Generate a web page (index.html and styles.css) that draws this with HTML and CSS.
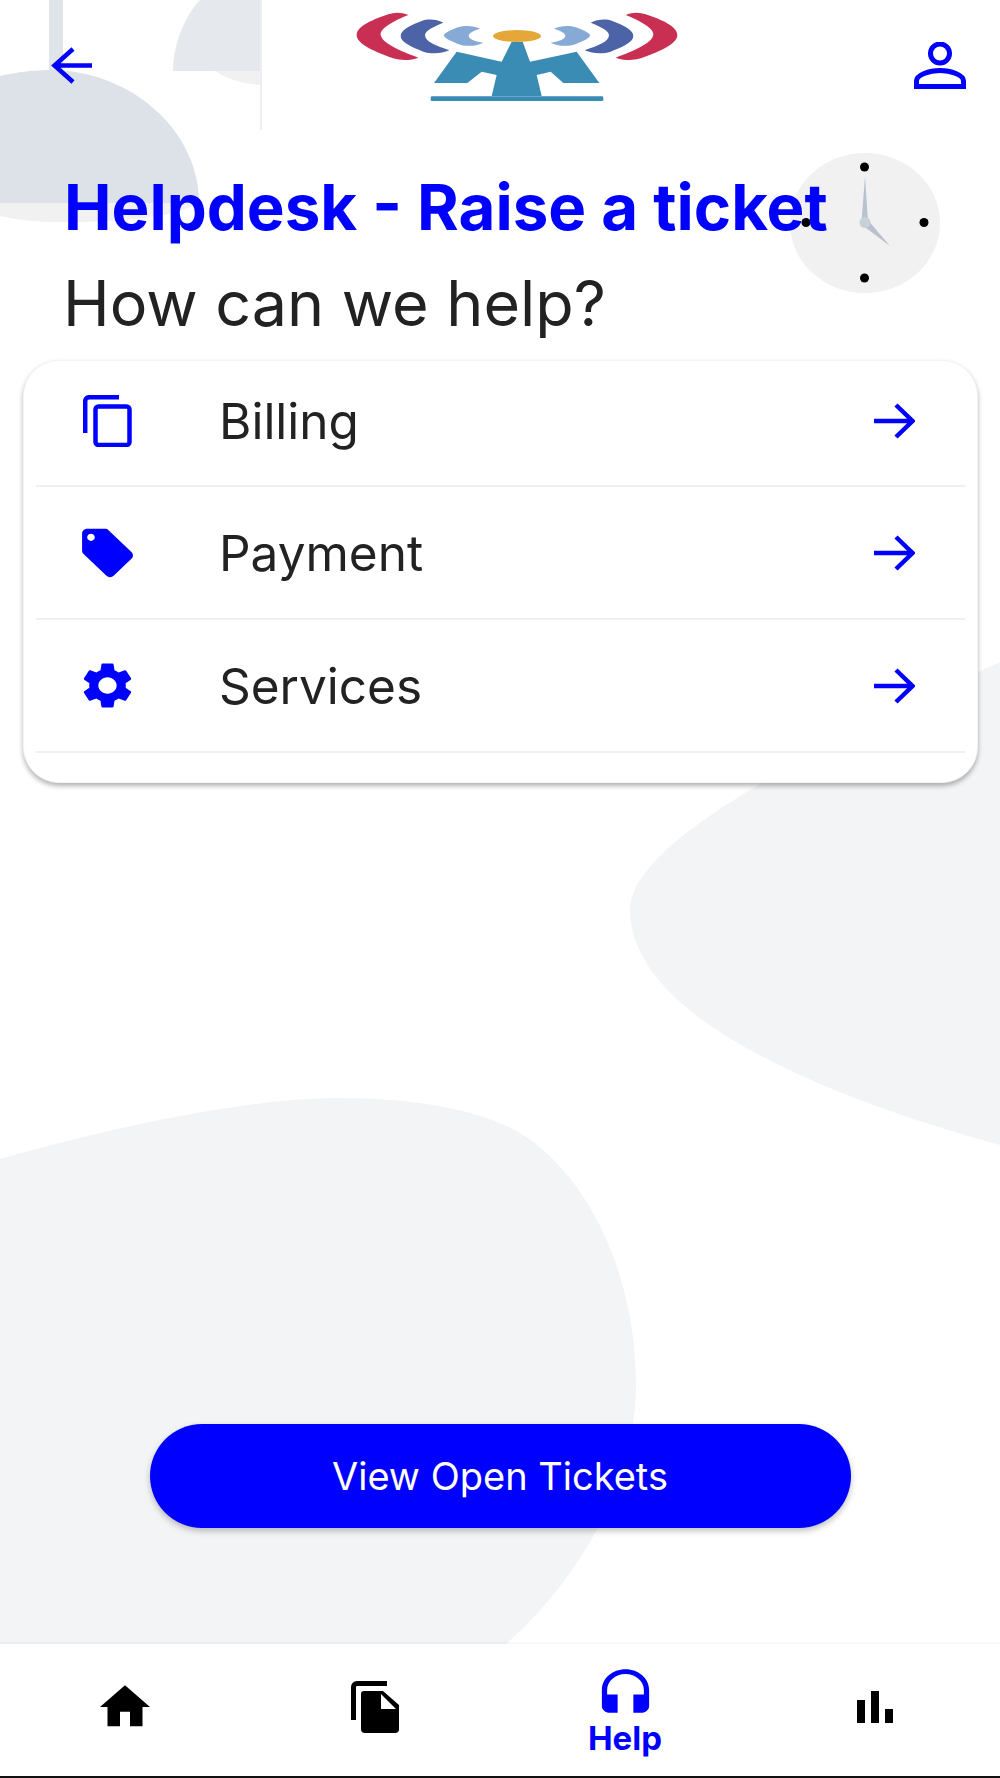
FILE: index.html
```html
<!DOCTYPE html>
<html>
<head>
    <meta charset="utf-8">
    <title>Helpdesk</title>
    <link rel="stylesheet" href="styles.css">
</head>
<body>
<div class="page">

    <!-- background shapes and clock -->
    <svg class="backdrop" viewBox="0 0 1000 1778" width="1000" height="1778">
        <rect x="49" y="0" width="14" height="72" fill="#e0e5ea"/>
        <path d="M0 203H198Q170 222 60 222Q25 222 0 216Z" fill="#f1f1f1"/>
        <path d="M0 76C17 72 35 70 50 70C130 70 199 130 199 203H0Z" fill="#dde2e8"/>
        <path d="M215 71Q235 84 260 85V71Z" fill="#f1f1f1"/>
        <path d="M200 0C185 15 173 45 173 71H260V0Z" fill="#e5e8ec"/>
        <rect x="260" y="0" width="2" height="130" fill="#eceef0"/>
        <path d="M1000 662L978 672C880 722 630 830 630 910C630 1010 800 1090 1000 1145Z" fill="#f3f4f6"/>
        <path d="M0 1159C120 1125 250 1098 340 1098C430 1098 500 1115 535 1143C600 1195 636 1290 636 1385C636 1470 590 1570 505 1645H0Z" fill="#f3f4f6"/>
        <ellipse cx="865" cy="223" rx="75" ry="70" fill="#f1f1f1"/>
        <circle cx="864.5" cy="167" r="4.5"/>
        <circle cx="864.5" cy="278" r="4.5"/>
        <circle cx="924" cy="222.5" r="4.5"/>
        <circle cx="806" cy="222.5" r="4.5"/>
        <path d="M865 176L868 222H861.5Z" fill="#b8c2ce"/>
        <path d="M890 246L862 225L867 219Z" fill="#b8c2ce"/>
        <circle cx="865" cy="222.5" r="5.5" fill="#c6d1da"/>
    </svg>

    <header class="topbar">
        <svg class="back-icon" viewBox="0 0 41 37" width="41" height="37" fill="none" stroke="#0000ff" stroke-width="4.5">
            <path d="M3 18.500H41M22 2L3.500 18.500L22 35"/>
        </svg>
        <svg class="logo" viewBox="0 0 1020 330" width="340" height="110">
            <g id="waves">
                <path d="M205 42C185 34 165 33 145 40C100 55 50 75 50 103C50 130 110 155 160 172C185 180 215 178 235 170C180 150 122 125 122 100C122 80 165 58 205 42Z" fill="#c92f52"/>
                <path d="M310 65C290 55 265 52 245 60C215 72 182 85 182 105C182 125 220 140 250 152C275 160 305 158 328 148C290 135 255 122 255 103C255 88 285 75 310 65Z" fill="#4d63a8"/>
                <path d="M420 83C400 73 370 72 350 80C330 88 312 96 312 103C312 112 335 122 352 128C378 138 410 136 430 125C408 122 386 115 386 104C386 96 402 88 420 83Z" fill="#86a9d6"/>
            </g>
            <use href="#waves" transform="translate(1062 0) scale(-1 1)"/>
            <path d="M515 122H548L570 182L710 152L778 246H670L632 212L590 222L605 285H455L470 222L425 212L382 246H282L350 152L485 182Z" fill="#3a8cb4"/>
            <rect x="272" y="286" width="518" height="14" rx="4" fill="#3a8cb4"/>
            <ellipse cx="531" cy="105" rx="72" ry="18" fill="#e4a738"/>
        </svg>
        <svg class="profile-icon" viewBox="0 0 52 47" width="52" height="47" fill="none" stroke="#0000ff" stroke-width="5">
            <circle cx="26" cy="11.500" r="9.500"/>
            <path d="M2.500 44.500V39C2.500 33 15 28.500 26 28.500S49.500 33 49.500 39V44.500Z"/>
        </svg>
    </header>

    <h1 class="title">Helpdesk - Raise a ticket</h1>
    <h2 class="subtitle">How can we help?</h2>

    <section class="card">
        <div class="row">
            <span class="row-icon">
                <svg viewBox="0 0 49 52" width="49" height="52" fill="none" stroke="#0000ff" stroke-width="4.500">
                    <path d="M36 2.200H6.200A4 4 0 0 0 2.200 6.200V38"/>
                    <rect x="12.500" y="11.500" width="34" height="38.500" rx="3"/>
                </svg>
            </span>
            <span class="row-label">Billing</span>
            <svg class="row-arrow" viewBox="0 0 41 36" width="41" height="36" fill="none" stroke="#0000ff" stroke-width="4.500">
                <path d="M0 18H38M22 2L38.500 18L22 34"/>
            </svg>
        </div>
        <div class="row">
            <span class="row-icon">
                <svg viewBox="0 0 24 24" width="61" height="58" preserveAspectRatio="none" fill="#0000ff">
                    <path d="M21.41 11.58l-9-9C12.05 2.220 11.550 2 11 2H4c-1.100 0-2 .9-2 2v7c0 .55.22 1.050.59 1.420l9 9c.36.36.86.58 1.410.58.55 0 1.050-.22 1.410-.59l7-7c.37-.36.59-.86.59-1.410 0-.55-.23-1.060-.59-1.420zM5.500 7C4.670 7 4 6.330 4 5.500S4.670 4 5.500 4 7 4.670 7 5.500 6.330 7 5.500 7z"/>
                </svg>
            </span>
            <span class="row-label">Payment</span>
            <svg class="row-arrow" viewBox="0 0 41 36" width="41" height="36" fill="none" stroke="#0000ff" stroke-width="4.500">
                <path d="M0 18H38M22 2L38.500 18L22 34"/>
            </svg>
        </div>
        <div class="row">
            <span class="row-icon">
                <svg viewBox="0 0 24 24" width="61" height="55" preserveAspectRatio="none" fill="#0000ff">
                    <path d="M19.14 12.94c.04-.3.06-.61.06-.94 0-.32-.02-.64-.07-.94l2.030-1.580c.18-.14.23-.41.12-.61l-1.920-3.320c-.12-.22-.37-.29-.59-.22l-2.390.96c-.5-.38-1.030-.7-1.620-.94l-.36-2.540c-.04-.24-.24-.41-.48-.41h-3.840c-.24 0-.43.17-.47.41l-.36 2.540c-.59.24-1.130.57-1.620.94l-2.390-.96c-.22-.08-.47 0-.59.22L2.740 8.870c-.12.21-.08.47.12.61l2.030 1.580c-.05.3-.09.63-.09.94s.02.64.07.94l-2.030 1.580c-.18.14-.23.41-.12.61l1.920 3.320c.12.22.37.29.59.22l2.390-.96c.5.38 1.030.7 1.620.94l.36 2.540c.05.24.24.41.48.41h3.840c.24 0 .44-.17.47-.41l.36-2.540c.59-.24 1.130-.56 1.620-.94l2.390.96c.22.08.47 0 .59-.22l1.920-3.320c.12-.22.07-.47-.12-.61l-2.010-1.580zM12 15.600c-1.980 0-3.600-1.620-3.600-3.600s1.620-3.600 3.600-3.600 3.600 1.620 3.600 3.600-1.620 3.600-3.600 3.600z"/>
                </svg>
            </span>
            <span class="row-label">Services</span>
            <svg class="row-arrow" viewBox="0 0 41 36" width="41" height="36" fill="none" stroke="#0000ff" stroke-width="4.500">
                <path d="M0 18H38M22 2L38.500 18L22 34"/>
            </svg>
        </div>
    </section>

    <button class="open-tickets">View Open Tickets</button>

    <nav class="tabbar">
        <div class="tab">
            <svg viewBox="0 0 24 24" width="60" height="58" preserveAspectRatio="none" fill="#000">
                <path d="M10 20v-6h4v6h5v-8h3L12 3 2 12h3v8z"/>
            </svg>
        </div>
        <div class="tab">
            <svg viewBox="0 0 48 52" width="48" height="52">
                <path d="M36 2.500H6A3.500 3.500 0 0 0 2.500 6V39" fill="none" stroke="#000" stroke-width="5"/>
                <path fill-rule="evenodd" d="M13 10H32L48 24V48A4 4 0 0 1 44 52H14A4 4 0 0 1 10 48V13A3 3 0 0 1 13 10ZM30 13V28H45Z"/>
            </svg>
        </div>
        <div class="tab tab-active">
            <svg viewBox="0 0 24 24" width="63" height="55" preserveAspectRatio="none" fill="#0000ff">
                <path d="M12 1c-4.970 0-9 4.030-9 9v7c0 1.660 1.340 3 3 3h3v-8H5v-2c0-3.870 3.130-7 7-7s7 3.130 7 7v2h-4v8h3c1.660 0 3-1.340 3-3v-7c0-4.970-4.030-9-9-9z"/>
            </svg>
            <span class="tab-label">Help</span>
        </div>
        <div class="tab">
            <svg viewBox="0 0 36 32" width="36" height="32">
                <rect x="0" y="9" width="8" height="23"/>
                <rect x="14" y="0" width="8" height="32"/>
                <rect x="28" y="18" width="8" height="14"/>
            </svg>
        </div>
    </nav>
</div>
</body>
</html>
```

FILE: styles.css
```css
body
{
    margin: 0;
    background: #fff;
    font-family: "Inter", "Liberation Sans", sans-serif;
}

.page
{
    position: relative;
    display: flex;
    flex-direction: column;
    width: 1000px;
    height: 1778px;
    overflow: hidden;
}

.backdrop
{
    position: absolute;
    left: 0;
    top: 0;
}

.topbar, .title, .subtitle, .card, .open-tickets, .tabbar
{
    position: relative;
}

.topbar
{
    display: flex;
    align-items: center;
    justify-content: space-between;
    height: 131px;
    padding: 0 34px 0 51px;
}

.logo
{
    margin: 0 0 19px 14px;
}

.title
{
    margin: 38px 0 0 64px;
    color: #0000ff;
    font-size: 63.600px;
    font-weight: 700;
    line-height: 76px;
}

.subtitle
{
    margin: 20px 0 0 63px;
    color: #222;
    font-size: 62.800px;
    font-weight: 400;
    line-height: 76px;
}

.card
{
    margin: 19px 22px 0 23px;
    padding: 0 12px 29px;
    background: #fff;
    border: 1px solid #f4f4f4;
    border-radius: 36px;
    box-shadow: 0 3px 5px rgba(0, 0, 0, .3);
}

.row
{
    display: flex;
    align-items: center;
    height: 133px;
    padding: 0 50px 0 41px;
    border-bottom: 2px solid #f0f0f0;
    box-sizing: border-box;
}

.row:first-child
{
    height: 126px;
    padding-bottom: 4px;
}

.row-icon
{
    display: flex;
    justify-content: center;
    width: 61px;
}

.row-label
{
    margin-left: 81px;
    color: #222;
    font-size: 49.500px;
}

.row-arrow
{
    margin-left: auto;
}

.open-tickets
{
    align-self: center;
    width: 701px;
    height: 104px;
    margin: auto 0 116px;
    padding: 0;
    border: none;
    border-radius: 52px;
    background: #0000ff;
    color: #fff;
    font-family: inherit;
    font-size: 38px;
    box-shadow: 0 3px 6px rgba(0, 0, 0, .25);
}

.tabbar
{
    display: grid;
    grid-template-columns: repeat(4, 250px);
    height: 134px;
    box-sizing: border-box;
    background: #fff;
    border-bottom: 2px solid #111;
    box-shadow: 0 -1px 3px rgba(0, 0, 0, .06);
}

.tab
{
    display: flex;
    flex-direction: column;
    align-items: center;
    justify-content: center;
    padding-bottom: 7px;
}

.tab-active
{
    justify-content: flex-start;
    padding: 23px 0 0;
}

.tab-label
{
    margin-top: -3px;
    color: #0000ff;
    font-size: 33px;
    font-weight: 700;
    line-height: 38px;
}
```
